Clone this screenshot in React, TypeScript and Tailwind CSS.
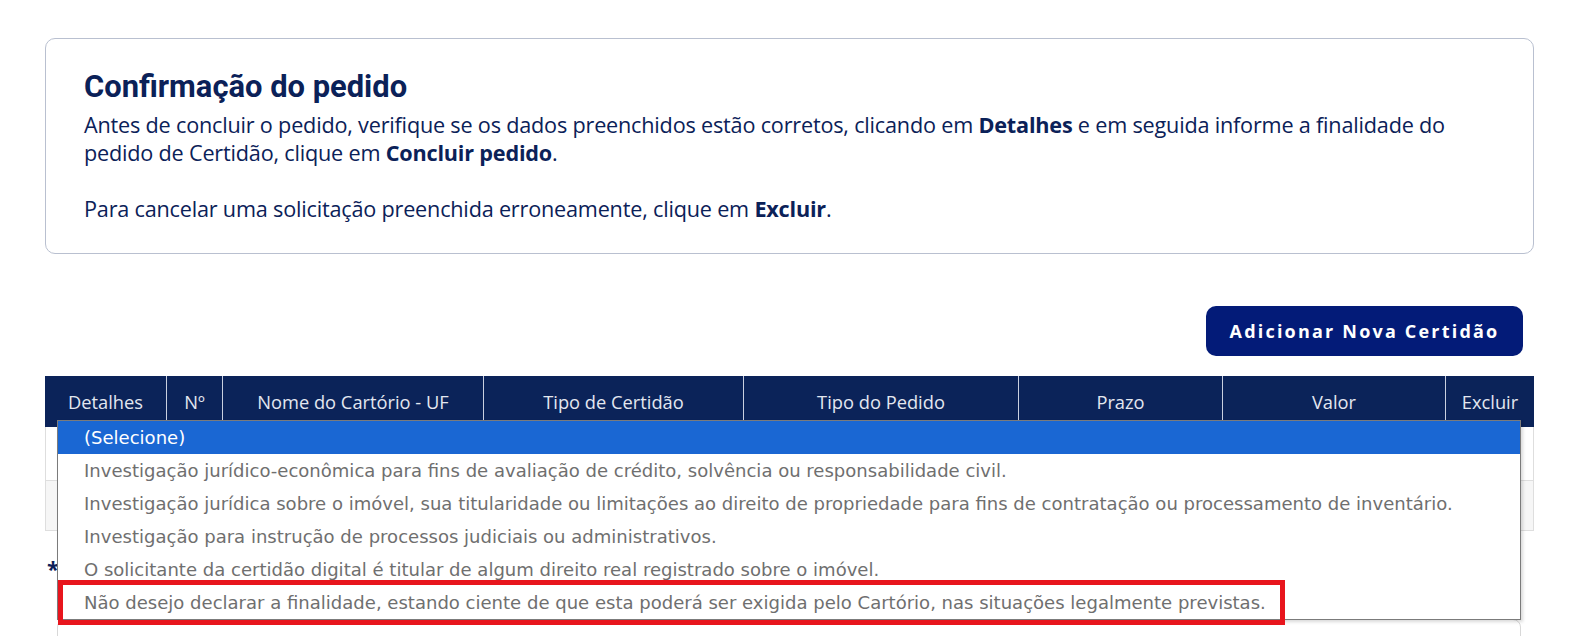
import React from "react";

const cols = [
  { w: 121, t: "Detalhes" },
  { w: 56, t: "Nº" },
  { w: 261, t: "Nome do Cartório - UF" },
  { w: 260, t: "Tipo de Certidão" },
  { w: 275, t: "Tipo do Pedido" },
  { w: 204, t: "Prazo" },
  { w: 223, t: "Valor" },
  { w: 89, t: "Excluir" },
];

const options = [
  "Investigação jurídico-econômica para fins de avaliação de crédito, solvência ou responsabilidade civil.",
  "Investigação jurídica sobre o imóvel, sua titularidade ou limitações ao direito de propriedade para fins de contratação ou processamento de inventário.",
  "Investigação para instrução de processos judiciais ou administrativos.",
  "O solicitante da certidão digital é titular de algum direito real registrado sobre o imóvel.",
  "Não desejo declarar a finalidade, estando ciente de que esta poderá ser exigida pelo Cartório, nas situações legalmente previstas.",
];

export default function App() {
  return (
    <div className="w-full h-[636px] overflow-hidden bg-white pl-[45px] pr-[39px] pt-[38px] font-['Open_Sans',sans-serif]">
      <div className="h-[216px] rounded-[10px] border border-[#b9c0d0] pl-[38px] pr-[60px] pt-[28px] text-[#0b2158]">
        <h1 className="font-['Roboto',sans-serif] text-[30.9px] font-bold leading-[40px] text-[#0b2158]">
          Confirmação do pedido
        </h1>
        <p className="mt-[4px] text-[21.65px] leading-[28px] tracking-[-0.2px]">
          Antes de concluir o pedido, verifique se os dados preenchidos estão corretos, clicando em <b>Detalhes</b> e em seguida informe a finalidade do pedido de Certidão, clique em <b>Concluir pedido</b>.
          <br />
          <br />
          Para cancelar uma solicitação preenchida erroneamente, clique em <b>Excluir</b>.
        </p>
      </div>

      <div className="mt-[52px] flex justify-end pr-[11px]">
        <button className="h-[50px] w-[317px] rounded-[10px] bg-[#031b78] text-[18px] font-bold tracking-[2.2px] text-white">
          Adicionar Nova Certidão
        </button>
      </div>

      <div className="relative mt-[20px]">
        <div className="flex h-[51px] bg-[#0b2359] text-[18.3px] text-[#e3e7f0]">
          {cols.map((c, i) => (
            <div
              key={i}
              style={{ width: c.w }}
              className={`flex items-center justify-center ${i > 0 ? "border-l border-[#c9d0e0]" : ""}`}
            >
              {c.t}
            </div>
          ))}
        </div>
        <div className="h-[54px] border-x border-b border-[#dedede] bg-white"></div>
        <div className="h-[50px] border-x border-b border-[#dedede] bg-[#f6f6f6]"></div>

        <div className="absolute left-[12px] top-[44px] z-10 w-[1464px] border border-[#7b7b7b] bg-white font-['DejaVu_Sans',sans-serif] text-[18.05px] text-[#6f6f6f] shadow-[2px_2px_3px_rgba(0,0,0,0.15)]">
          <div className="flex h-[33px] items-center bg-[#1a67d3] pl-[26px] text-white">(Selecione)</div>
          {options.map((o, i) => (
            <div key={i} className="flex h-[33px] items-center whitespace-nowrap pl-[26px]">
              {o}
            </div>
          ))}
          <div className="pointer-events-none absolute left-[0px] top-[159px] h-[45px] w-[1227px] border-[5px] border-[#e8151d]"></div>
        </div>
      </div>

      <div className="mt-[26px] pl-[2px] text-[22px] font-bold leading-[22px] text-[#0b2158]">*</div>
      <div className="ml-[12px] mt-[40px] h-[40px] w-[1464px] rounded-[8px] border border-[#d8d8d8]"></div>
    </div>
  );
}
